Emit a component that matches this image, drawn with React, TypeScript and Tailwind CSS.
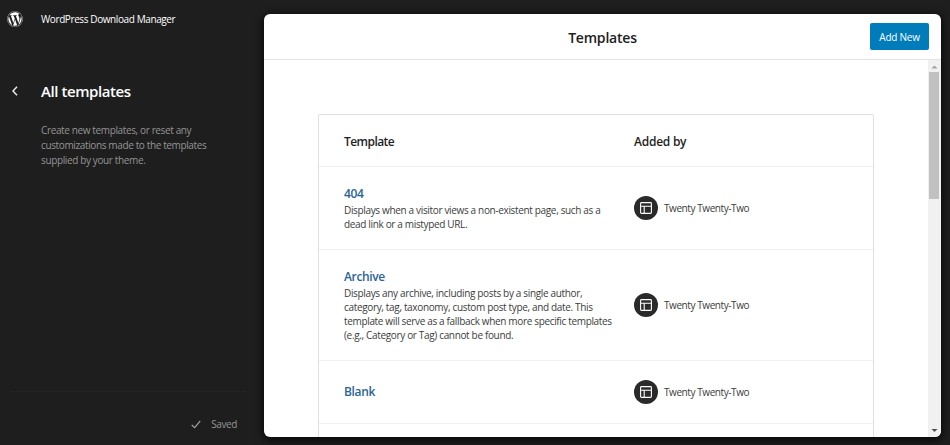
import type { ReactNode } from 'react';
import { FaWordpress } from 'react-icons/fa';

interface Template {
  title: string;
  description: string[];
  theme: string;
  rowClass: string;
}

const templates: Template[] = [
  {
    title: '404',
    description: [
      'Displays when a visitor views a non-existent page, such as a',
      'dead link or a mistyped URL.',
    ],
    theme: 'Twenty Twenty-Two',
    rowClass: 'h-[83px]',
  },
  {
    title: 'Archive',
    description: [
      'Displays any archive, including posts by a single author,',
      'category, tag, taxonomy, custom post type, and date. This',
      'template will serve as a fallback when more specific templates',
      '(e.g., Category or Tag) cannot be found.',
    ],
    theme: 'Twenty Twenty-Two',
    rowClass: 'h-[111px]',
  },
  {
    title: 'Blank',
    description: [],
    theme: 'Twenty Twenty-Two',
    rowClass: 'h-[63px]',
  },
];

function LayoutIcon() {
  return (
    <svg viewBox="0 0 12 12" className="size-3" fill="none" stroke="#fff" strokeWidth="1.100">
      <rect x=".6" y=".6" width="10.800" height="10.800" rx=".8" />
      <path d="M.6 4.300h10.800M4.200 4.300v7" />
    </svg>
  );
}

function Lines({ items }: { items: string[] }) {
  return (
    <>
      {items.map((line) => (
        <span key={line} className="block whitespace-nowrap">
          {line}
        </span>
      ))}
    </>
  );
}

function Sidebar() {
  return (
    <aside className="flex h-full w-[264px] shrink-0 flex-col text-white">
      <div className="flex h-[38px] items-center">
        <FaWordpress className="ml-[7px] size-4" />
        <span className="ml-[18px] text-[10px] tracking-[-0.4px] whitespace-nowrap">
          WordPress Download Manager
        </span>
      </div>

      <div className="mt-[41px] flex h-6 items-center">
        <svg viewBox="0 0 6 10" className="ml-3 h-[10px] w-[6px]" fill="none" stroke="#f0f0f0" strokeWidth="1.400">
          <path d="M5 .8 1 5l4 4.200" />
        </svg>
        <h1 className="ml-[23px] text-[15px] font-semibold tracking-[-0.42px] whitespace-nowrap">
          All templates
        </h1>
      </div>

      <p className="mt-5 ml-[41px] text-[10px] leading-[15px] tracking-[-0.37px] text-[#949494]">
        <Lines
          items={[
            'Create new templates, or reset any',
            'customizations made to the templates',
            'supplied by your theme.',
          ]}
        />
      </p>

      <div className="mt-auto mr-[18px] ml-[10px] flex h-[54px] items-center justify-end border-t border-[#242424] pt-[12px] text-[10px] tracking-[-0.4px] text-[#949494]">
        <svg viewBox="0 0 10 9" className="mr-[10px] h-[9px] w-[10px]" fill="none" stroke="#a0a0a0" strokeWidth="1.200">
          <path d="M.7 5 3.700 7.700 9.200.8" />
        </svg>
        <span className="mr-[9px]">Saved</span>
      </div>
    </aside>
  );
}

function Row({ className, left, right }: { className: string; left: ReactNode; right: ReactNode }) {
  return (
    <div className={`flex items-center border-b border-[#f0f0f0] pl-[25px] ${className}`}>
      <div className="w-[290px] shrink-0">{left}</div>
      <div>{right}</div>
    </div>
  );
}

function TemplateTable() {
  return (
    <div className="mt-[54px] ml-[54px] h-[340px] w-[556px] rounded-[2px] border border-[#e0e0e0]">
      <Row
        className="h-[52px] pt-0.5 text-[12px] font-semibold text-[#1e1e1e]"
        left={<span className="tracking-[-0.55px]">Template</span>}
        right={<span className="tracking-[-0.25px]">Added by</span>}
      />
      {templates.map((template) => (
        <Row
          key={template.title}
          className={template.rowClass}
          left={
            <>
              <a className="mb-px block text-[12px] leading-[19px] font-semibold tracking-[-0.35px] text-[#2a6496]">
                {template.title}
              </a>
              <div className="text-[10px] leading-[13.800px] tracking-[-0.34px] text-[#3c3c3c]">
                <Lines items={template.description} />
              </div>
            </>
          }
          right={
            <div className="flex items-center gap-[6px]">
              <span className="flex size-6 items-center justify-center rounded-full bg-[#2a2a2a]">
                <LayoutIcon />
              </span>
              <span className="text-[10px] tracking-[-0.42px] whitespace-nowrap text-[#3c3c3c]">{template.theme}</span>
            </div>
          }
        />
      ))}
    </div>
  );
}

function ScrollBar() {
  return (
    <div className="flex w-[13px] shrink-0 flex-col items-center bg-[#f1f1f1] pr-px">
      <svg viewBox="0 0 11 12" className="h-3 w-[11px] shrink-0" fill="#a3a3a3">
        <path d="M2.500 8.500h6l-3-3z" />
      </svg>
      <div className="h-[127px] w-[10px] shrink-0 bg-[#c1c1c1]" />
      <svg viewBox="0 0 11 12" className="mt-auto h-3 w-[11px] shrink-0" fill="#505050">
        <path d="M2.500 4h6l-3 3z" />
      </svg>
    </div>
  );
}

export default function App() {
  return (
    <div className="flex h-[445px] w-[950px] overflow-hidden bg-[#1e1e1e] font-['Open_Sans','Noto_Sans',sans-serif]">
      <Sidebar />
      <main className="mt-[14px] flex h-[423px] w-[677px] flex-col overflow-hidden rounded-[6px] bg-white shadow-[0_2px_8px_1px_rgba(0,0,0,0.8)]">
        <header className="flex h-[46px] shrink-0 items-center border-b border-[#e4e4e4] pr-[12px]">
          <div className="flex-1 pt-px pl-[71px] text-center">
            <h2 className="text-[14px] font-semibold tracking-[-0.2px] text-[#1e1e1e]">Templates</h2>
          </div>
          <button className="h-[27px] w-[59px] rounded-[2px] bg-[#007cba] pt-px text-[10px] tracking-[-0.25px] whitespace-nowrap text-white">
            Add New
          </button>
        </header>
        <div className="flex min-h-0 flex-1">
          <div className="min-w-0 flex-1 overflow-hidden">
            <TemplateTable />
          </div>
          <ScrollBar />
        </div>
      </main>
    </div>
  );
}
